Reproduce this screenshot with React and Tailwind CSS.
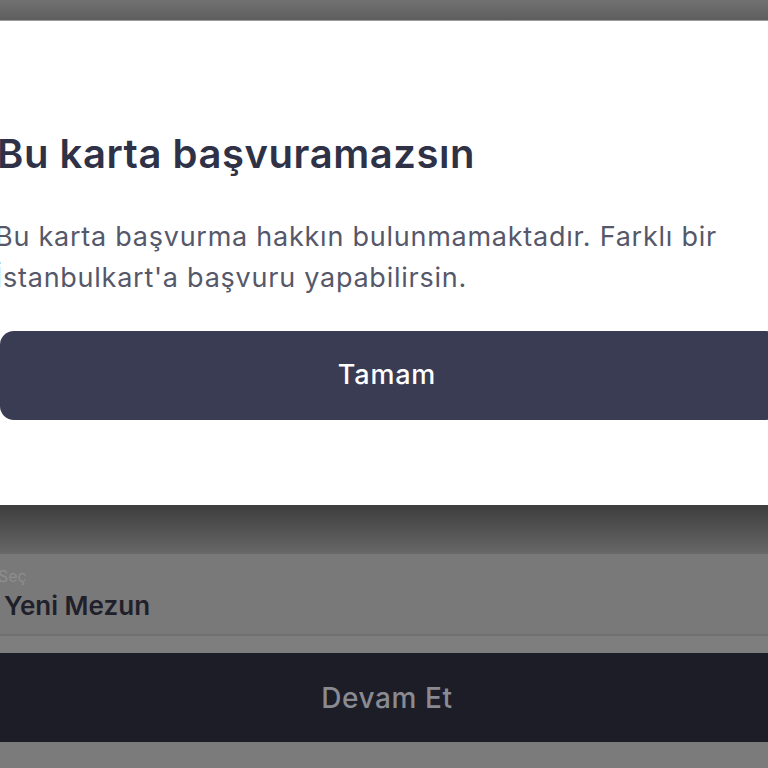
export default function App() {
  return (
    <div
      className="flex h-[768px] w-[768px] flex-col overflow-hidden bg-[#7b7b7b]"
      style={{ fontFamily: "Inter, 'Noto Sans', sans-serif" }}
    >
      <div className="h-[20px] shrink-0 bg-gradient-to-b from-[#717171] to-[#5e5e5e]" />
      <div className="h-[1px] shrink-0 bg-[#9c9c9c]" />

      {/* dialog */}
      <div className="flex h-[484px] shrink-0 flex-col bg-white">
        <h1 className="ml-[-3px] mt-[109px] text-[40px] font-semibold leading-[48px] tracking-[0.55px] text-[#2f3247]">
          Bu karta başvuramazsın
        </h1>
        <p className="ml-[-5px] mt-[38px] w-[790px] text-[27px] leading-[41px] tracking-[0.75px] text-[#56586a]">
          Bu karta başvurma hakkın bulunmamaktadır. Farklı bir
          <br />
          İstanbulkart'a başvuru yapabilirsin.
        </p>
        <button
          type="button"
          className="mt-[33px] flex h-[89px] w-[780px] items-center justify-center rounded-[14px] bg-[#393c52] text-[27px] font-medium tracking-[0.8px] text-white"
        >
          <span className="ml-[-6px]">Tamam</span>
        </button>
      </div>

      {/* page behind the overlay */}
      <div className="h-[47px] shrink-0 bg-gradient-to-b from-[#3d3d3d] to-[#666666]" />
      <div className="h-[2px] shrink-0 bg-[#686868]" />
      <div className="flex h-[80px] shrink-0 flex-col bg-[#797979] pl-[4px]">
        <span className="mt-[12px] ml-[-6px] text-[16px] leading-[20px] text-[#8d8d8d]">Seç</span>
        <span className="mt-[5px] text-[26px] font-semibold leading-[30px] text-[#1f2029]">
          Yeni Mezun
        </span>
      </div>
      <div className="h-[2px] shrink-0 bg-[#707070]" />
      <div className="h-[17px] shrink-0 bg-[#7e7e7e]" />
      <div className="flex h-[89px] shrink-0 items-center justify-center bg-[#1c1d27] text-[28px] font-medium tracking-[0.6px] text-[#8a8b92]">
        <span className="ml-[6px]">Devam Et</span>
      </div>
      <div className="flex-1 bg-[#7b7b7b]" />
    </div>
  );
}
